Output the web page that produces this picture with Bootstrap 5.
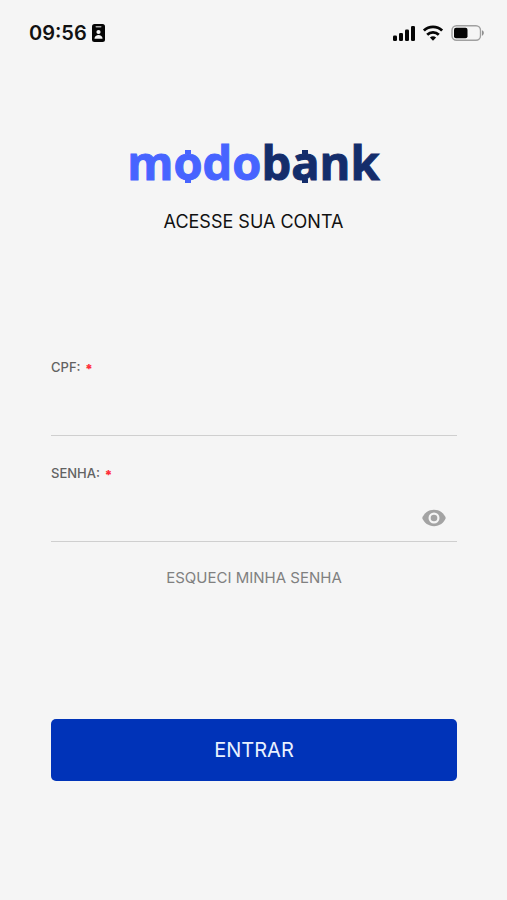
<!DOCTYPE html>
<html lang="pt-BR">
<head>
<meta charset="utf-8">
<meta name="viewport" content="width=device-width, initial-scale=1">
<title>modobank</title>
<link href="https://cdn.jsdelivr.net/npm/bootstrap@5.3.0/dist/css/bootstrap.min.css" rel="stylesheet">
<style>
  body { background: #f5f5f5; color: #111; font-family: Inter, "Liberation Sans", sans-serif; }
  .status-bar { height: 66px; padding: 0 22px 0 29px; }
  .clock { font-size: 20px; font-weight: 600; line-height: 24px; }
  .brand { margin-top: 64px; font-family: "Open Sans", "Noto Sans", sans-serif; font-weight: 700; font-size: 47px; line-height: 64px; color: #4764ff; -webkit-text-stroke: 1px currentColor; }
  .brand-dark { color: #142d6b; }
  .coin { position: relative; display: inline-block; }
  .coin::before, .coin::after { content: ""; position: absolute; left: calc(50% - 3px); width: 6px; height: 4px; background: currentColor; }
  .coin::before { top: 20px; }
  .coin::after { top: 49px; }
  .headline { margin-top: 16px; font-size: 18px; font-weight: 400; line-height: 24px; }
  .login { padding: 0 50px 0 51px; margin-top: 124px; }
  .login label { display: block; font-size: 13px; font-weight: 500; line-height: 18px; color: #626262; }
  .req { display: inline-block; height: 18px; vertical-align: top; padding-top: 2px; color: #ff2f3a; font-weight: 900; margin-left: 1px; }
  .line-field { height: 60px; border-bottom: 1px solid #cfcfcf; }
  .line-field input { font-size: 18px; }
  .second { margin-top: 28px; }
  .eye { color: #a3a3a3; margin: 13px 11px 0 0; }
  .forgot { margin-top: 24px; font-size: 15px; line-height: 24px; color: #808080; }
  .enter { margin-top: 129px; height: 62px; border-radius: 5px; background: #0033b8; color: #e8f1ff; font-size: 20px; }
  .enter:hover { background: #002a9a; color: #fff; }
</style>
<script src="https://cdn.jsdelivr.net/npm/bootstrap@5.3.0/dist/js/bootstrap.bundle.min.js"></script>
</head>
<body>
<header class="status-bar d-flex align-items-center justify-content-between">
  <div class="d-flex align-items-center gap-1">
    <span class="clock">09:56</span>
    <svg width="14" height="18" viewBox="0 0 14 18" aria-hidden="true">
      <rect x="1" y="0" width="13" height="18" rx="2.5" fill="#050505"/>
      <rect x="4.500" y="2" width="6" height="1.600" rx=".8" fill="#aaa"/>
      <circle cx="7.500" cy="8" r="2.100" fill="#f5f5f5"/>
      <path d="M3.500 14.800c0-5 8-5 8 0z" fill="#f5f5f5"/>
    </svg>
  </div>
  <div class="d-flex align-items-center gap-2">
    <svg width="23" height="16" viewBox="0 0 23 16" fill="#050505" aria-hidden="true">
      <rect x="1" y="10.500" width="4" height="5.500" rx="1.300"/><rect x="7" y="8" width="4" height="8" rx="1.300"/>
      <rect x="13" y="4.500" width="4" height="11.500" rx="1.300"/><rect x="19" y="1" width="4" height="15" rx="1.300"/>
    </svg>
    <svg width="20" height="16" viewBox="0 0 20 16" fill="none" stroke="#050505" stroke-width="2.800" aria-hidden="true">
      <path d="M.9 5.600a13 13 0 0 1 18.200 0M4.200 9.700a8.300 8.300 0 0 1 11.600 0"/>
      <path d="M6.900 12.600a4.500 4.500 0 0 1 6.200 0L10 15.800z" fill="#050505" stroke="none"/>
    </svg>
    <svg width="34" height="16" viewBox="0 0 34 16" aria-hidden="true">
      <rect x="1" y=".8" width="28.500" height="14.400" rx="4.500" fill="none" stroke="#a0a0a0" stroke-width="1.400"/>
      <rect x="3" y="2.700" width="13.500" height="10.600" rx="2" fill="#050505"/>
      <path d="M31 5.300c2.400.8 2.400 4.600 0 5.400z" fill="#8f8f8f"/>
    </svg>
  </div>
</header>
<main>
  <div class="brand text-center" aria-label="modobank">m<span class="coin">o</span>do<span class="brand-dark">b<span class="coin">a</span>nk</span></div>
  <h1 class="headline text-center mb-0">ACESSE SUA CONTA</h1>
  <form class="login">
    <label for="cpf">CPF: <span class="req">*</span></label>
    <div class="line-field d-flex">
      <input id="cpf" type="text" inputmode="numeric" class="form-control border-0 bg-transparent shadow-none px-0" required>
    </div>
    <label class="second" for="senha">SENHA: <span class="req">*</span></label>
    <div class="line-field d-flex align-items-center">
      <input id="senha" type="password" class="form-control border-0 bg-transparent shadow-none px-0" required>
      <button type="button" class="eye btn p-0 border-0 d-flex" aria-label="Mostrar senha">
        <svg width="24" height="18" viewBox="0 0 24 18" aria-hidden="true">
          <path d="M12 .8C6.500.8 2 4.200.2 9c1.800 4.800 6.300 8.200 11.800 8.200S22 13.800 23.800 9C22 4.200 17.500.8 12 .8z" fill="currentColor"/>
          <circle cx="12" cy="9" r="5.500" fill="#f5f5f5"/><circle cx="12" cy="9" r="3.300" fill="currentColor"/>
        </svg>
      </button>
    </div>
    <div class="forgot text-center"><a href="#" class="text-reset text-decoration-none">ESQUECI MINHA SENHA</a></div>
    <button type="submit" class="enter btn border-0 w-100 p-0">ENTRAR</button>
  </form>
</main>
</body>
</html>
